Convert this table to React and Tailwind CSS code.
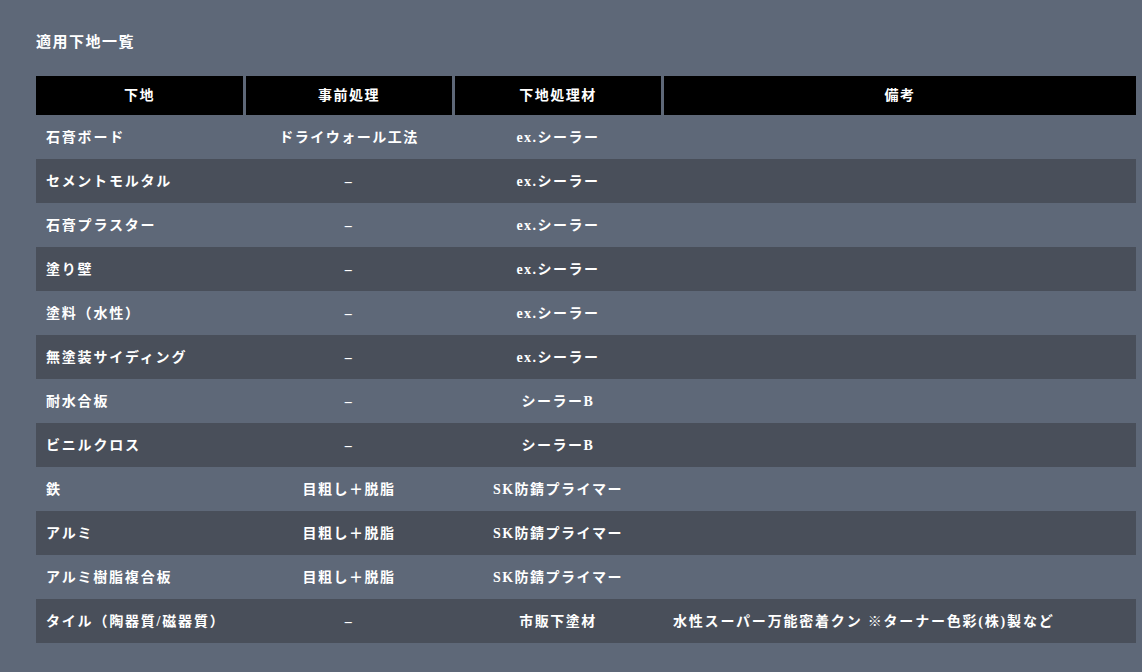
const rows = [
  { base: '石膏ボード', pre: 'ドライウォール工法', mat: 'ex.シーラー', note: '' },
  { base: 'セメントモルタル', pre: '–', mat: 'ex.シーラー', note: '' },
  { base: '石膏プラスター', pre: '–', mat: 'ex.シーラー', note: '' },
  { base: '塗り壁', pre: '–', mat: 'ex.シーラー', note: '' },
  { base: '塗料（水性）', pre: '–', mat: 'ex.シーラー', note: '' },
  { base: '無塗装サイディング', pre: '–', mat: 'ex.シーラー', note: '' },
  { base: '耐水合板', pre: '–', mat: 'シーラーB', note: '' },
  { base: 'ビニルクロス', pre: '–', mat: 'シーラーB', note: '' },
  { base: '鉄', pre: '目粗し＋脱脂', mat: 'SK防錆プライマー', note: '' },
  { base: 'アルミ', pre: '目粗し＋脱脂', mat: 'SK防錆プライマー', note: '' },
  { base: 'アルミ樹脂複合板', pre: '目粗し＋脱脂', mat: 'SK防錆プライマー', note: '' },
  { base: 'タイル（陶器質/磁器質）', pre: '–', mat: '市販下塗材', note: '水性スーパー万能密着クン ※ターナー色彩(株)製など' },
];

const cols = 'grid grid-cols-[207px_206px_206px_472px] gap-x-[3px]';

export default function App() {
  return (
    <main className="min-h-screen w-full bg-[#5e6878] text-white font-['Liberation_Serif','Noto_Sans_CJK_JP',serif] font-bold">
      <div className="px-[36px] pt-[32px]">
        {/* Title */}
        <h2 className="text-[15px] leading-[20px] tracking-[1.5px]">適用下地一覧</h2>

        {/* Table */}
        <div className="mt-[24px] w-[1100px] text-[14px] tracking-[1.5px]">
          <div className={cols}>
            {['下地', '事前処理', '下地処理材', '備考'].map((h) => (
              <div key={h} className="h-[39px] bg-black flex items-center justify-center">{h}</div>
            ))}
          </div>
          {rows.map((r, i) => (
            <div key={r.base} className={`${cols} h-[44px] items-center ${i % 2 === 1 ? 'bg-[#494f5a]' : ''}`}>
              <div className="pl-[10px] tracking-[1.8px]">{r.base}</div>
              <div className="text-center">{r.pre}</div>
              <div className="text-center">{r.mat}</div>
              <div className="pl-[9px] tracking-[1.8px]">{r.note}</div>
            </div>
          ))}
        </div>
      </div>
    </main>
  );
}
